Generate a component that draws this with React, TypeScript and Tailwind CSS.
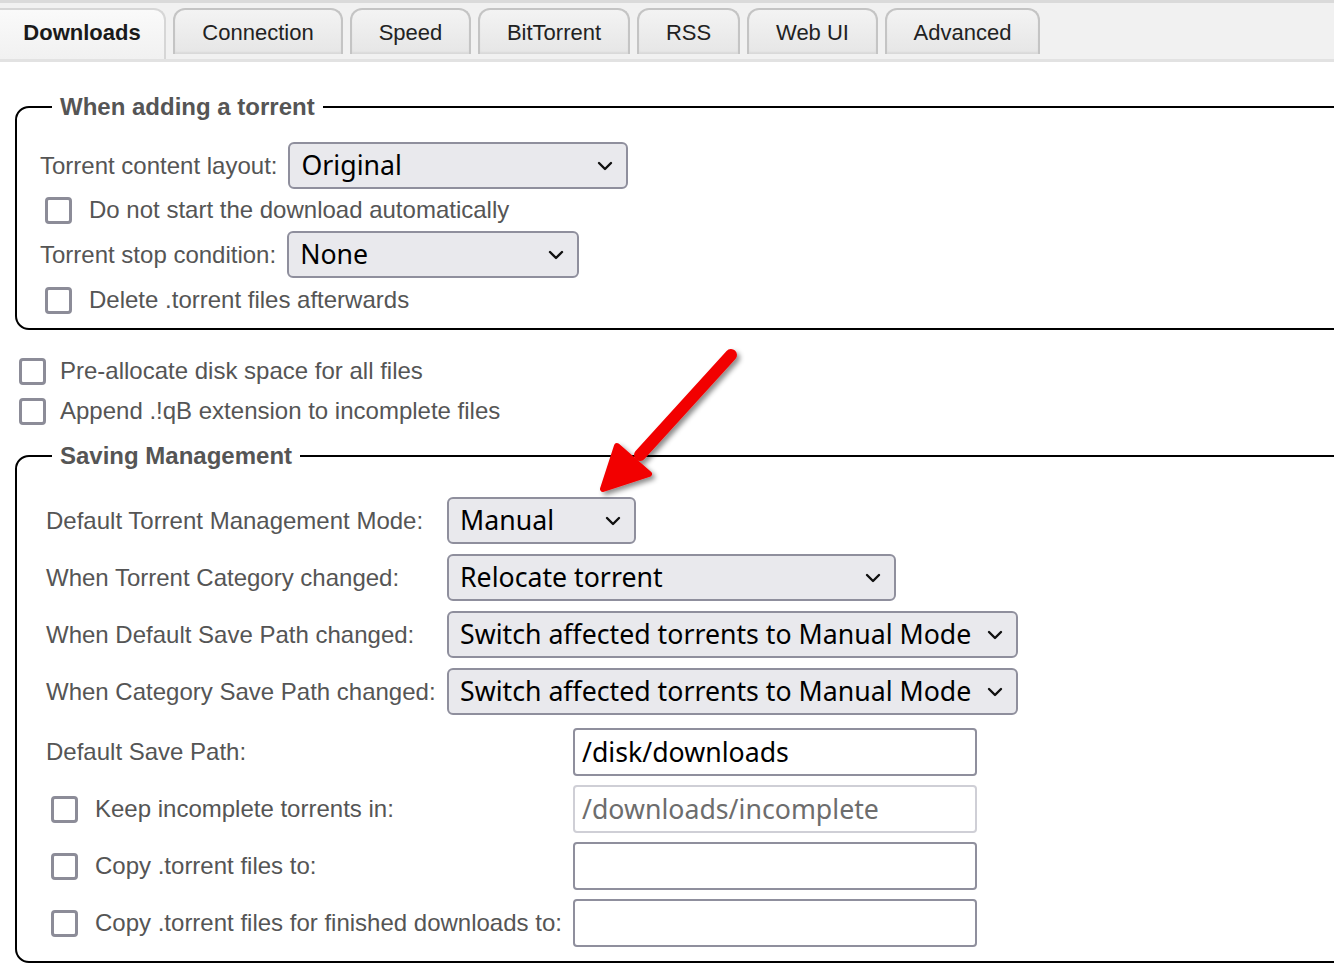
import React from "react";

const LABEL = "font-['Liberation_Sans',Arial,sans-serif] text-[24px] leading-[28px] text-[#555555] whitespace-nowrap";
const CTRL = "font-['Noto_Sans',sans-serif] text-[26.7px] text-black";

function Chevron() {
  return (
    <svg width="16" height="10" viewBox="0 0 16 10" className="shrink-0">
      <path d="M2 2 L8 8 L14 2" fill="none" stroke="#111" strokeWidth="2.4" strokeLinecap="round" strokeLinejoin="round" />
    </svg>
  );
}

function Select({ value, w }: { value: string; w: string }) {
  return (
    <div
      className={`${w} h-[47px] shrink-0 flex items-center justify-between pl-[11px] pr-[13px] bg-[#e9e9ed] border-2 border-[#8f8f9d] rounded-[6px] ${CTRL} leading-none`}
    >
      <span className="whitespace-nowrap">{value}</span>
      <Chevron />
    </div>
  );
}

function Box() {
  return <div className="w-[27px] h-[27px] shrink-0 border-[3px] border-[#8c8c98] rounded-[4px] bg-white" />;
}

function Check({ label, ml, gap }: { label: string; ml: string; gap: string }) {
  return (
    <div className={`flex items-center ${ml} ${gap}`}>
      <Box />
      <span className={LABEL}>{label}</span>
    </div>
  );
}

function Input({ value, disabled }: { value?: string; disabled?: boolean }) {
  return (
    <div
      className={`w-[404px] h-[48px] flex items-center px-[7px] bg-white rounded-[4px] border-2 ${
        disabled ? "border-[#cfcfd6] text-[#6d6d6d]" : "border-[#8f8f9d] text-black"
      } font-['Noto_Sans',sans-serif] text-[26.7px] leading-none`}
    >
      {value}
    </div>
  );
}

const tabs = [
  { t: "Downloads", w: "w-[166px]", active: true },
  { t: "Connection", w: "w-[170px]" },
  { t: "Speed", w: "w-[121px]" },
  { t: "BitTorrent", w: "w-[152px]" },
  { t: "RSS", w: "w-[103px]" },
  { t: "Web UI", w: "w-[131px]" },
  { t: "Advanced", w: "w-[155px]" },
];

export default function App() {
  return (
    <div className="relative w-[1334px] h-[980px] overflow-hidden bg-white">
      {/* Tab bar */}
      <div className="h-[62px] bg-[#f1f1f1] border-t-[3px] border-[#dadada] border-b-[3px] border-b-[#e2e2e2] flex items-end gap-[7px]">
        {tabs.map((tab) => (
          <div
            key={tab.t}
            className={`${tab.w} ${
              tab.active
                ? "h-[51px] pb-[5px] bg-gradient-to-b from-[#fafafa] to-[#f1f1f1] font-bold text-[#1a1a1a] border-[#d6d6d6] border-l-0 rounded-tl-none"
                : "h-[46px] mb-[5px] bg-gradient-to-b from-[#f3f3f3] to-[#e6e6e6] text-[#222] border-[#c4c4c4] shadow-[inset_0_-2px_2px_rgba(0,0,0,0.06)]"
            } shrink-0 flex items-center justify-center border-2 border-b-0 rounded-t-[12px] font-['Liberation_Sans',Arial,sans-serif] text-[22px]`}
          >
            {tab.t}
          </div>
        ))}
      </div>

      <div className="pt-[32px]">
        {/* Fieldset 1 */}
        <fieldset className="ml-[15px] w-[1400px] border-2 border-black rounded-[14px] pl-[23px] pt-[22px] pb-[6px]">
          <legend className="ml-[12px] px-[8px] font-['Liberation_Sans',Arial,sans-serif] text-[24px] font-bold text-[#555555] leading-[26px]">
            When adding a torrent
          </legend>
          <div className="flex flex-col">
            <div className="flex items-center gap-[11px] h-[47px]">
              <span className={LABEL}>Torrent content layout:</span>
              <Select value="Original" w="w-[340px]" />
            </div>
            <div className="h-[42px] flex items-center">
              <Check label="Do not start the download automatically" ml="ml-[5px]" gap="gap-[17px]" />
            </div>
            <div className="flex items-center gap-[11px] h-[47px]">
              <span className={LABEL}>Torrent stop condition:</span>
              <Select value="None" w="w-[292px]" />
            </div>
            <div className="h-[44px] flex items-center">
              <Check label="Delete .torrent files afterwards" ml="ml-[5px]" gap="gap-[17px]" />
            </div>
          </div>
        </fieldset>

        <div className="mt-[21px] flex flex-col pl-[19px]">
          <div className="h-[40px] flex items-center">
            <Check label="Pre-allocate disk space for all files" ml="" gap="gap-[14px]" />
          </div>
          <div className="h-[40px] flex items-center">
            <Check label="Append .!qB extension to incomplete files" ml="" gap="gap-[14px]" />
          </div>
        </div>

        {/* Fieldset 2 */}
        <fieldset className="mt-[12px] ml-[15px] w-[1400px] border-2 border-black rounded-[14px] pl-[29px] pt-[28px] pb-[14px]">
          <legend className="ml-[6px] px-[8px] font-['Liberation_Sans',Arial,sans-serif] text-[24px] font-bold text-[#555555] leading-[26px]">
            Saving Management
          </legend>
          <div className="grid grid-cols-[401px_auto] gap-y-[10px] items-center justify-start">
            <span className={LABEL}>Default Torrent Management Mode:</span>
            <Select value="Manual" w="w-[189px]" />
            <span className={LABEL}>When Torrent Category changed:</span>
            <Select value="Relocate torrent" w="w-[449px]" />
            <span className={LABEL}>When Default Save Path changed:</span>
            <Select value="Switch affected torrents to Manual Mode" w="w-[571px]" />
            <span className={LABEL}>When Category Save Path changed:</span>
            <Select value="Switch affected torrents to Manual Mode" w="w-[571px]" />
          </div>
          <div className="mt-[13px] grid grid-cols-[527px_auto] gap-y-[9px] items-center justify-start">
            <span className={LABEL}>Default Save Path:</span>
            <Input value="/disk/downloads" />
            <Check label="Keep incomplete torrents in:" ml="ml-[5px]" gap="gap-[17px]" />
            <Input value="/downloads/incomplete" disabled />
            <Check label="Copy .torrent files to:" ml="ml-[5px]" gap="gap-[17px]" />
            <Input />
            <Check label="Copy .torrent files for finished downloads to:" ml="ml-[5px]" gap="gap-[17px]" />
            <Input />
          </div>
        </fieldset>
      </div>

      {/* Red arrow annotation */}
      <svg className="absolute left-0 top-0 pointer-events-none" width="1334" height="980">
        <defs>
          <filter id="sh" x="-20%" y="-20%" width="140%" height="140%">
            <feDropShadow dx="3" dy="3" stdDeviation="2.5" floodColor="#000" floodOpacity="0.45" />
          </filter>
        </defs>
        <g filter="url(#sh)">
          <line x1="731" y1="355" x2="640" y2="455" stroke="#f20000" strokeWidth="12" strokeLinecap="round" />
          <path d="M617 446 L649 474 L603 489 Z" fill="#f20000" stroke="#f20000" strokeWidth="6" strokeLinejoin="round" />
        </g>
      </svg>
    </div>
  );
}
